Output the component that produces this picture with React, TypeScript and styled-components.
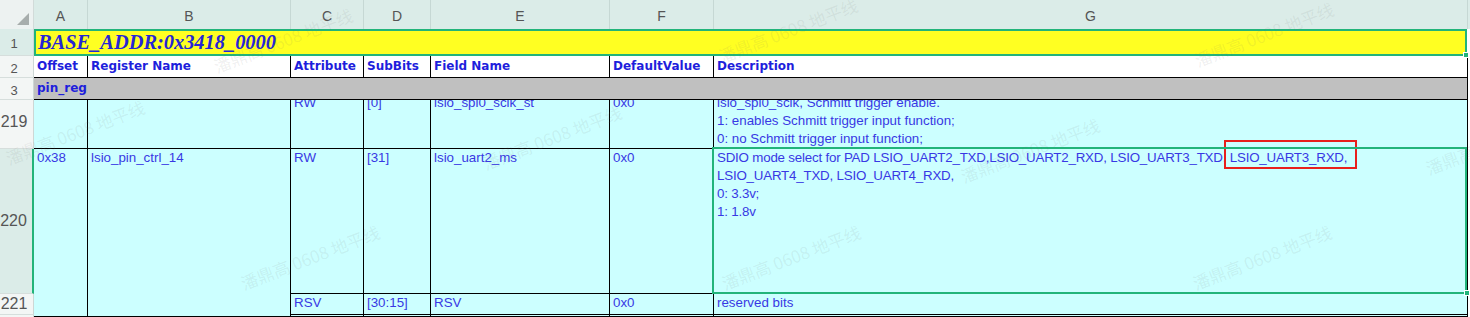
import React from 'react';
import styled, { createGlobalStyle } from 'styled-components';

const GREEN = '#22b47a';
const TEXT_BLUE = '#3838e4';
const HEAD_BLUE = '#1e1edc';

const GlobalStyle = createGlobalStyle`
    html, body {
        margin: 0;
        padding: 0;
        background: #ffffff;
        overflow: hidden;
    }
    #root {
        width: 1470px;
        height: 317px;
    }
`;

const Sheet = styled.div`
    position: relative;
    display: grid;
    grid-template-columns: 34px 54px 203px 73px 67px 179px 104px 754px 2px;
    grid-template-rows: 29px 27px 22px 22px 49px 145px 21px 2px;
    width: 1470px;
    height: 317px;
    overflow: hidden;
    background: #ffffff;
    font-family: 'Liberation Sans', Arial, sans-serif;
`;

const Corner = styled.div`
    grid-area: 1 / 1;
    position: relative;
    background: #edf2f1;
    border-right: 1px solid #d2dbd9;

    &::after {
        content: '';
        position: absolute;
        right: 4px;
        bottom: 4px;
        width: 0;
        height: 0;
        border-style: solid;
        border-width: 0 0 12px 12px;
        border-color: transparent transparent #a7adac transparent;
    }
`;

const ColHead = styled.div<{ $col: number }>`
    grid-row: 1;
    grid-column: ${props => props.$col};
    display: flex;
    align-items: center;
    justify-content: center;
    padding-top: 2px;
    background: #dbece8;
    border-right: 1px solid #c6d8d4;
    color: #555555;
    font-size: 14px;
`;

const RowHead = styled.div<{ $row: number; $selected?: boolean; $marked?: boolean; $big?: boolean; $lift?: boolean }>`
    grid-column: 1;
    grid-row: ${props => props.$row};
    display: flex;
    align-items: center;
    justify-content: center;
    padding: ${props => props.$big ? (props.$lift ? '0 5px 4px 0' : '0 5px 0 0') : '3px 5px 0 0'};
    background: ${props => props.$selected ? '#dbece8' : '#f3f6f5'};
    border-bottom: 1px solid #d6dedc;
    border-right: ${props => props.$marked ? `2px solid ${GREEN}` : '1px solid #cdd7d5'};
    color: #555555;
    font-size: ${props => props.$big ? 16 : 13}px;
`;

const Gutter = styled.div<{ $row: number; $head?: boolean }>`
    grid-column: 9;
    grid-row: ${props => props.$row};
    background: ${props => props.$head ? '#dbece8' : '#f7f7f7'};
`;

const TitleCell = styled.div`
    grid-area: 2 / 2 / 3 / 9;
    position: relative;
    z-index: 2;
    display: flex;
    align-items: center;
    margin-right: 1px;
    padding-left: 2px;
    background: #ffff22;
    border: 2px solid ${GREEN};
    color: #2626d6;
    font-family: 'Liberation Serif', 'Times New Roman', serif;
    font-size: 20.4px;
    font-weight: bold;
    font-style: italic;

    &::after {
        content: '';
        position: absolute;
        right: -4px;
        bottom: -4px;
        width: 4px;
        height: 4px;
        background: ${GREEN};
        border: 1px solid #ffffff;
    }
`;

const HeadCell = styled.div<{ $col: number; $tone?: 'white' | 'gray'; $span?: number }>`
    grid-row: ${props => props.$tone === 'gray' ? 4 : 3};
    grid-column: ${props => props.$col} / span ${props => props.$span ?? 1};
    display: flex;
    align-items: center;
    padding: 0 3px 1px;
    background: ${props => props.$tone === 'gray' ? '#c0c0c0' : '#ffffff'};
    border-right: 1px solid #000000;
    border-bottom: 1px solid #000000;
    color: ${HEAD_BLUE};
    font-family: 'DejaVu Sans', Verdana, sans-serif;
    font-size: 12px;
    font-weight: bold;
    white-space: nowrap;
    overflow: hidden;
`;

const Cell = styled.div<{ $area: string; $open?: boolean }>`
    grid-area: ${props => props.$area};
    position: ${props => props.$open ? 'relative' : 'static'};
    z-index: ${props => props.$open ? 2 : 'auto'};
    min-width: 0;
    padding: 0 3px;
    background: #ccffff;
    border-right: 1px solid #000000;
    border-bottom: 1px solid #000000;
    overflow: ${props => props.$open ? 'visible' : 'hidden'};
`;

const Lines = styled.div<{ $shift?: number; $tight?: boolean }>`
    margin-top: ${props => props.$shift ?? 0}px;
    color: ${TEXT_BLUE};
    font-size: 13.33px;
    line-height: 18px;
    letter-spacing: ${props => props.$tight ? '-0.2px' : 'normal'};
    white-space: pre;
`;

const Selection = styled.div`
    position: absolute;
    left: -2px;
    top: -2px;
    right: 0;
    bottom: -1px;
    border: 2px solid ${GREEN};
    pointer-events: none;

    &::after {
        content: '';
        position: absolute;
        right: -5px;
        bottom: -4px;
        width: 4px;
        height: 4px;
        background: ${GREEN};
        border: 1px solid #ffffff;
    }
`;

const Marked = styled.span`
    position: relative;

    &::after {
        content: '';
        position: absolute;
        left: -6px;
        right: -10px;
        top: -10px;
        bottom: -4px;
        border: 2px solid #e8201c;
        pointer-events: none;
    }
`;

const WatermarkLayer = styled.div`
    position: absolute;
    inset: 0;
    z-index: 5;
    pointer-events: none;
    overflow: hidden;
`;

const Mark = styled.span<{ $x: number; $y: number }>`
    position: absolute;
    left: ${props => props.$x}px;
    top: ${props => props.$y}px;
    transform: translate(-50%, -50%) rotate(-21deg);
    white-space: nowrap;
    color: rgba(110, 110, 110, 0.1);
    font-family: 'Noto Sans CJK SC', 'Noto Sans', sans-serif;
    font-size: 17px;
`;

const headers = ['Offset', 'Register Name', 'Attribute', 'SubBits', 'Field Name', 'DefaultValue', 'Description'];

const row219 = ['RW', '[0]', 'lsio_spi0_sclk_st', '0x0'];
const row221 = ['RSV', '[30:15]', 'RSV', '0x0', 'reserved bits'];
const row220 = ['RW', '[31]', 'lsio_uart2_ms', '0x0'];

const marks = [
    { x: 283, y: 40 }, { x: 788, y: 30 }, { x: 1264, y: 34 },
    { x: 75, y: 132 }, { x: 552, y: 137 }, { x: 1030, y: 150 }, { x: 1495, y: 142 },
    { x: 310, y: 257 }, { x: 791, y: 257 }, { x: 1262, y: 257 },
];

export default function App() {
    return (
        <>
            <GlobalStyle />
            <Sheet>
                <Corner />
                {['A', 'B', 'C', 'D', 'E', 'F', 'G'].map((letter, i) => (
                    <ColHead key={letter} $col={i + 2}>{letter}</ColHead>
                ))}
                <Gutter $row={1} $head />

                <RowHead $row={2} $selected>1</RowHead>
                <RowHead $row={3}>2</RowHead>
                <RowHead $row={4}>3</RowHead>
                <RowHead $row={5} $big $lift>219</RowHead>
                <RowHead $row={6} $big $selected $marked>220</RowHead>
                <RowHead $row={7} $big>221</RowHead>
                <RowHead $row={8} />

                <TitleCell>BASE_ADDR:0x3418_0000</TitleCell>

                {headers.map((text, i) => (
                    <HeadCell key={text} $col={i + 2}>{text}</HeadCell>
                ))}
                <HeadCell $col={2} $span={7} $tone="gray">pin_reg</HeadCell>

                <Cell $area="5 / 2" />
                <Cell $area="5 / 3" />
                {row219.map((text, i) => (
                    <Cell key={i} $area={`5 / ${i + 4}`}>
                        <Lines $shift={-6}>{text}</Lines>
                    </Cell>
                ))}
                <Cell $area="5 / 8">
                    <Lines $shift={-6}>
                        {'lsio_spi0_sclk, Schmitt trigger enable.\n1: enables Schmitt trigger input function;\n0: no Schmitt trigger input function;'}
                    </Lines>
                </Cell>

                <Cell $area="6 / 2 / 9 / 3">
                    <Lines>0x38</Lines>
                </Cell>
                <Cell $area="6 / 3 / 9 / 4">
                    <Lines>lsio_pin_ctrl_14</Lines>
                </Cell>
                {row220.map((text, i) => (
                    <Cell key={i} $area={`6 / ${i + 4}`}>
                        <Lines>{text}</Lines>
                    </Cell>
                ))}
                <Cell $area="6 / 8" $open>
                    <Lines $tight>
                        {'SDIO mode select for PAD LSIO_UART2_TXD,LSIO_UART2_RXD, LSIO_UART3_TXD, '}
                        <Marked>LSIO_UART3_RXD,</Marked>
                        {'\nLSIO_UART4_TXD, LSIO_UART4_RXD,\n0: 3.3v;\n1: 1.8v'}
                    </Lines>
                    <Selection />
                </Cell>

                {row221.map((text, i) => (
                    <Cell key={i} $area={`7 / ${i + 4}`}>
                        <Lines>{text}</Lines>
                    </Cell>
                ))}
                {[4, 5, 6, 7, 8].map(col => (
                    <Cell key={col} $area={`8 / ${col}`} />
                ))}

                <WatermarkLayer>
                    {marks.map((m, i) => (
                        <Mark key={i} $x={m.x} $y={m.y}>潘鼎高 0608 地平线</Mark>
                    ))}
                </WatermarkLayer>
            </Sheet>
        </>
    );
}
